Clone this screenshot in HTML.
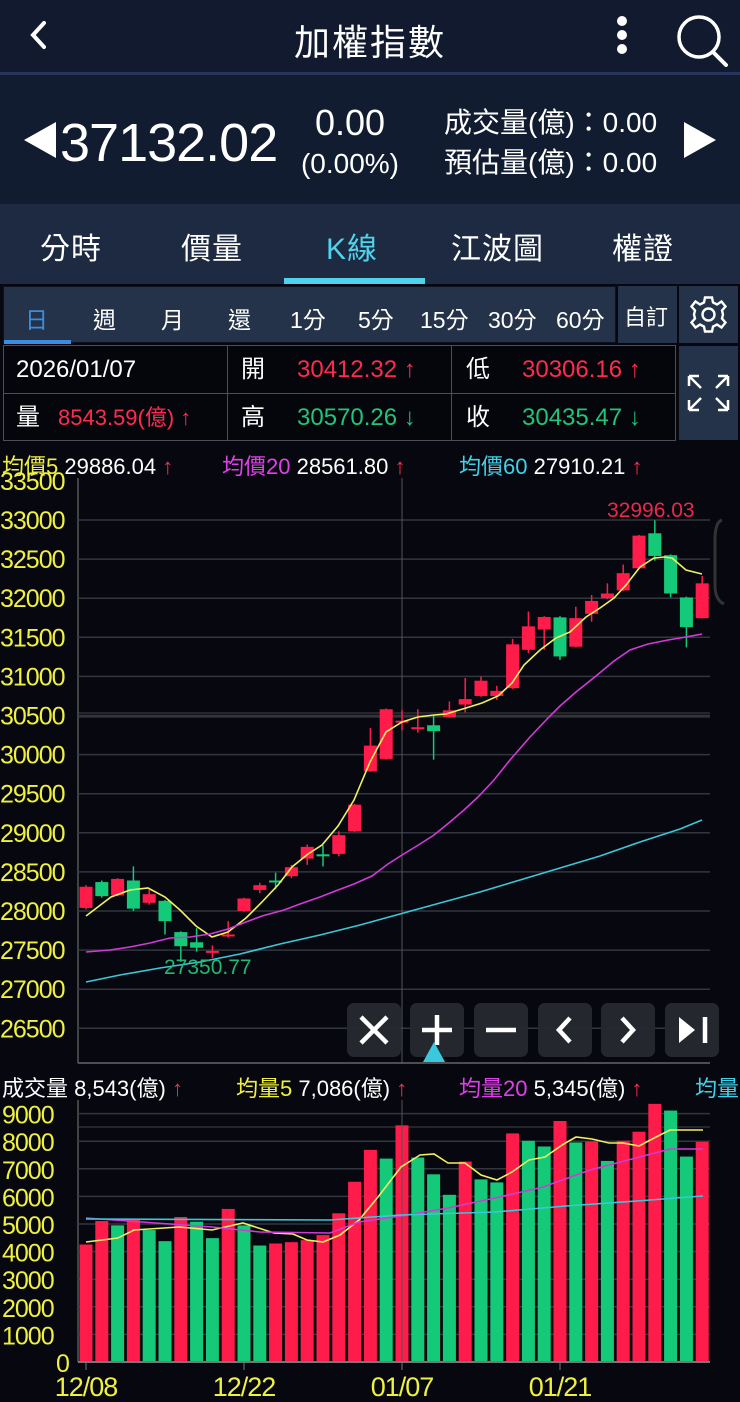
<!DOCTYPE html>
<html><head><meta charset="utf-8">
<style>
*{margin:0;padding:0;box-sizing:border-box}
body{width:740px;height:1402px;background:#07080f;font-family:"Liberation Sans","Noto Sans CJK TC",sans-serif;color:#fff;position:relative;overflow:hidden}
.abs{position:absolute}
.hdr{left:0;top:0;width:740px;height:72px;background:#111a2e}
.sep{left:0;top:72px;width:740px;height:3px;background:#27345e}
.quote{left:0;top:75px;width:740px;height:129px;background:#121c30}
.tabs{left:0;top:204px;width:740px;height:80px;background:#1d2a41}
.tab{position:absolute;top:20px;font-size:30px;color:#fff;letter-spacing:1px}
.sub{left:3px;top:286px;width:613px;height:57px;background:#243349;border:1px solid #0c1220}
.st{position:absolute;top:14px;font-size:23px;color:#fff}
.box{background:#243349}
.tbl{left:3px;top:345px;width:673px;height:96px;background:#05060b;border:1px solid #4a4f5a}
.cell{position:absolute;font-size:24px;line-height:30px}
.red{color:#ff2b4f}.grn{color:#20c47a}
.ma{position:absolute;font-size:22px;white-space:nowrap}
</style></head><body>
<div class="abs hdr"></div>
<div class="abs sep"></div>
<svg class="abs" style="left:26px;top:20px" width="24" height="30" viewBox="0 0 24 30"><path d="M18 3 L7 15 L18 27" stroke="#fff" stroke-width="4" fill="none" stroke-linecap="round"/></svg>
<div class="abs" style="left:0;width:740px;top:14px;text-align:center;font-size:36px;letter-spacing:2px">加權指數</div>
<svg class="abs" style="left:612px;top:14px" width="20" height="42"><circle cx="10" cy="7" r="5" fill="#fff"/><circle cx="10" cy="21" r="5" fill="#fff"/><circle cx="10" cy="35" r="5" fill="#fff"/></svg>
<svg class="abs" style="left:674px;top:12px" width="56" height="56"><circle cx="25" cy="25" r="20" stroke="#fff" stroke-width="3.5" fill="none"/><path d="M39 40 L52 53" stroke="#fff" stroke-width="4" stroke-linecap="round"/></svg>

<div class="abs quote"></div>
<svg class="abs" style="left:22px;top:120px" width="36" height="40"><path d="M34 2 L2 20 L34 38Z" fill="#fff"/></svg>
<div class="abs" style="left:60px;top:112px;font-size:54px;letter-spacing:-1px">37132.02</div>
<div class="abs" style="left:300px;top:102px;width:100px;text-align:center;font-size:36px">0.00</div>
<div class="abs" style="left:296px;top:148px;width:108px;text-align:center;font-size:28px">(0.00%)</div>
<div class="abs" style="left:444px;top:101px;font-size:28px">成交量(億)：0.00</div>
<div class="abs" style="left:444px;top:141px;font-size:28px">預估量(億)：0.00</div>
<svg class="abs" style="left:682px;top:120px" width="36" height="40"><path d="M2 2 L34 20 L2 38Z" fill="#fff"/></svg>

<div class="abs tabs">
<div class="tab" style="left:40px">分時</div>
<div class="tab" style="left:181px">價量</div>
<div class="tab" style="left:326px;color:#4fd3ec">K線</div>
<div class="tab" style="left:451px">江波圖</div>
<div class="tab" style="left:612px">權證</div>
<div class="abs" style="left:284px;top:74px;width:141px;height:6px;background:#4fd3ec"></div>
</div>

<div class="abs sub">
<div class="st" style="left:21px;color:#3a8ee0">日</div>
<div class="st" style="left:89px">週</div>
<div class="st" style="left:157px">月</div>
<div class="st" style="left:224px">還</div>
<div class="st" style="left:286px">1分</div>
<div class="st" style="left:354px">5分</div>
<div class="st" style="left:416px">15分</div>
<div class="st" style="left:484px">30分</div>
<div class="st" style="left:552px">60分</div>
<div class="abs" style="left:0;top:53px;width:67px;height:4px;background:#3a8ee0"></div>
</div>
<div class="abs box" style="left:618px;top:286px;width:59px;height:57px"><div class="st" style="left:6px;font-size:22px">自訂</div></div>
<div class="abs box" style="left:679px;top:286px;width:59px;height:57px">
<svg width="59" height="57" viewBox="0 0 59 57"><g transform="translate(29.5,28.5)" fill="none" stroke="#fff" stroke-width="2.4"><path d="M-3.5,-17 L3.5,-17 L4.5,-12 L8.5,-10 L13,-13 L17,-8 L13.5,-4 L14.5,0 L13.5,4 L17,8 L13,13 L8.5,10 L4.5,12 L3.5,17 L-3.5,17 L-4.5,12 L-8.5,10 L-13,13 L-17,8 L-13.5,4 L-14.5,0 L-13.5,-4 L-17,-8 L-13,-13 L-8.5,-10 L-4.5,-12Z"/><circle r="6"/></g></svg></div>

<div class="abs tbl">
<div class="abs" style="left:223px;top:0;width:1px;height:94px;background:#4a4f5a"></div>
<div class="abs" style="left:447px;top:0;width:1px;height:94px;background:#4a4f5a"></div>
<div class="abs" style="left:0;top:47px;width:671px;height:1px;background:#4a4f5a"></div>
<div class="cell" style="left:12px;top:9px">2026/01/07</div>
<div class="cell" style="left:237px;top:9px">開</div>
<div class="cell red" style="left:293px;top:9px">30412.32 ↑</div>
<div class="cell" style="left:462px;top:9px">低</div>
<div class="cell red" style="left:518px;top:9px">30306.16 ↑</div>
<div class="cell" style="left:12px;top:57px">量</div>
<div class="cell red" style="left:54px;top:57px;font-size:22px">8543.59(億) ↑</div>
<div class="cell" style="left:237px;top:57px">高</div>
<div class="cell grn" style="left:293px;top:57px">30570.26 ↓</div>
<div class="cell" style="left:462px;top:57px">收</div>
<div class="cell grn" style="left:518px;top:57px">30435.47 ↓</div>
</div>
<div class="abs box" style="left:679px;top:346px;width:59px;height:94px">
<svg width="59" height="94"><g stroke="#fff" stroke-width="2.5" fill="none"><path d="M10 30 L10 40 M10 30 L20 30 M10 30 L22 42"/><path d="M49 30 L49 40 M49 30 L39 30 M49 30 L37 42"/><path d="M10 64 L10 54 M10 64 L20 64 M10 64 L22 52"/><path d="M49 64 L49 54 M49 64 L39 64 M49 64 L37 52"/></g></svg></div>

<div class="ma" style="left:2px;top:449px"><span style="color:#f0f040">均價5</span> 29886.04 <span class="red">↑</span></div>
<div class="ma" style="left:222px;top:449px"><span style="color:#e040e8">均價20</span> 28561.80 <span class="red">↑</span></div>
<div class="ma" style="left:459px;top:449px"><span style="color:#40d0e8">均價60</span> 27910.21 <span class="red">↑</span></div>

<svg id="ch" class="abs" style="left:0;top:0" width="740" height="1402"></svg>

<div class="ma" style="left:2px;top:1071px">成交量 8,543(億) <span class="red">↑</span></div>
<div class="ma" style="left:236px;top:1071px"><span style="color:#f0f040">均量5</span> 7,086(億) <span class="red">↑</span></div>
<div class="ma" style="left:459px;top:1071px"><span style="color:#e040e8">均量20</span> 5,345(億) <span class="red">↑</span></div>
<div class="ma" style="left:695px;top:1071px"><span style="color:#40d0e8">均量</span></div>

<script>
var s='';var Y=function(p){return 520+(33000-p)*0.0782};
s+='<line x1="78" y1="478" x2="78" y2="1063" stroke="#555" stroke-width="1.5"/>';
for(var p=33500;p>=26500;p-=500){var y=Y(p);if(p<33500)s+='<line x1="78" y1="'+y+'" x2="710" y2="'+y+'" stroke="#33363e" stroke-width="1.5"/>';s+='<text x="0" y="'+(y+9)+'" fill="#f0f040" font-size="25" letter-spacing="-1">'+p+'</text>';}
s+='<line x1="78" y1="713" x2="710" y2="713" stroke="#444" /><line x1="78" y1="717" x2="710" y2="717" stroke="#444"/>';
s+='<line x1="402" y1="478" x2="402" y2="1063" stroke="#555"/>';
s+='<line x1="78" y1="1063" x2="710" y2="1063" stroke="#666" stroke-width="1.5"/>';
var C=[[28040,28310,28330,28020],[28370,28190,28390,28170],[28200,28410,28420,28190],[28390,28030,28570,28000],[28105,28215,28270,28080],[28130,27870,28140,27700],[27730,27550,27740,27350],[27600,27530,27780,27480],[27470,27490,27560,27400],[27690,27700,27870,27660],[28000,28160,28170,27990],[28270,28330,28360,28230],[28390,28385,28490,28280],[28445,28560,28590,28420],[28670,28820,28850,28590],[28725,28720,28840,28570],[28730,28970,29020,28700],[29020,29360,29370,29010],[29785,30115,30340,29780],[29945,30580,30590,29940],[30430,30434,30570,30310],[30345,30350,30580,30280],[30375,30300,30500,29935],[30480,30566,30680,30470],[30640,30710,30980,30540],[30750,30945,31000,30740],[30750,30815,30880,30700],[30850,31410,31480,30840],[31340,31640,31830,31300],[31600,31760,31770,31340],[31755,31255,31770,31210],[31380,31745,31890,31370],[31800,31965,32040,31700],[32000,32060,32190,31990],[32100,32320,32430,32090],[32383,32800,32810,32380],[32830,32540,32996,32480],[32550,32060,32560,32010],[32010,31630,32020,31370],[31745,32190,32285,31740]];
C.forEach(function(c,i){var x=86+15.8*i;var up=c[1]>=c[0];var col=up?'#ff1c4a':'#14c978';var t=Y(Math.max(c[0],c[1])),b=Y(Math.min(c[0],c[1]));
s+='<line x1="'+x+'" y1="'+Y(c[2])+'" x2="'+x+'" y2="'+Y(c[3])+'" stroke="'+col+'" stroke-width="1.5"/>';
s+='<rect x="'+(x-6.5)+'" y="'+t+'" width="13" height="'+Math.max(b-t,2)+'" fill="'+col+'"/>';});
function pl(pts,col){s+='<polyline points="'+pts+'" fill="none" stroke="'+col+'" stroke-width="1.6"/>';}
pl('86,916 111,897 130,890 148,888 165,897 180,910 196,926 212,937 228,932 246,918 262,902 278,885 292,867 308,854 322,845 338,826 354,800 370,762 386,732 402,722 418,717 434,715 446,714 466,708 482,703 498,696 512,683 524,665 540,650 556,638 570,632 586,617 600,608 614,598 626,585 640,567 654,558 664,557 672,558 686,570 702,574','#f0f060');
pl('86,952 110,950 130,947 150,943 170,938 190,937 210,934 228,929 246,922 262,916 284,910 300,904 320,897 338,890 354,884 372,876 388,864 402,855 420,844 434,835 450,822 464,810 478,797 494,780 510,760 530,737 548,718 560,706 576,692 596,676 614,661 630,650 648,644 668,640 686,637 702,634','#d23ad8');
pl('86,982 120,975 160,968 200,962 240,954 280,944 320,935 360,925 400,914 440,903 480,892 520,880 560,868 600,856 640,842 680,829 702,820','#3ac8d8');
s+='<text x="607" y="517" fill="#e8284c" font-size="21">32996.03</text>';
s+='<text x="164" y="974" fill="#22b874" font-size="21">27350.77</text>';
s+='<path d="M722 520 Q715 522 715 540 L715 585 Q715 600 724 604" stroke="#333" stroke-width="3" fill="none"/>';
var bx=[347,410,474,538,601,665];bx.forEach(function(x){s+='<rect x="'+x+'" y="1003" width="54" height="54" rx="7" fill="#26292f" fill-opacity="0.95"/>';});
var W='stroke="#fff" stroke-width="4.5" fill="none"';
s+='<path d="M361 1017 L387 1043 M387 1017 L361 1043" '+W+'/>';
s+='<path d="M437 1015 L437 1045 M422 1030 L452 1030" '+W+'/>';
s+='<path d="M486 1030 L516 1030" '+W+'/>';
s+='<path d="M570 1018 L559 1030 L570 1042" '+W+'/>';
s+='<path d="M622 1018 L633 1030 L622 1042" '+W+'/>';
s+='<path d="M679 1017 L679 1043 L695 1030Z" fill="#fff"/><path d="M705 1017 L705 1043" '+W+'/>';
s+='<path d="M434 1042 L445 1062 L423 1062Z" fill="#3cc8dc"/>';
var VY=function(v){return 1362-v*0.0276};
s+='<line x1="78" y1="1100" x2="78" y2="1362" stroke="#555" stroke-width="1.5"/>';
for(var v=9000;v>=0;v-=1000){var y=VY(v);if(v>0)s+='<line x1="78" y1="'+y+'" x2="710" y2="'+y+'" stroke="#33363e" stroke-width="1.5"/>';s+='<text x="'+(v>=1000?2:56)+'" y="'+(y+10)+'" fill="#f0f040" font-size="25" letter-spacing="-1">'+v+'</text>';}
s+='<line x1="78" y1="1127" x2="710" y2="1127" stroke="#444"/>';
var V=[[4257,1],[5108,1],[4950,0],[5169,1],[4780,0],[4378,0],[5254,1],[5084,0],[4488,0],[5546,1],[4950,0],[4220,0],[4293,1],[4342,1],[4415,1],[4597,1],[5388,1],[6531,1],[7686,1],[7370,0],[8574,1],[7407,0],[6800,0],[6057,0],[7261,1],[6616,0],[6507,0],[8282,1],[8015,0],[7808,0],[8732,1],[7954,0],[7990,1],[7285,0],[8015,1],[8343,1],[9353,1],[9110,0],[7443,0],[7978,1]];
V.forEach(function(b,i){var x=86+15.8*i;var t=VY(b[0]);s+='<rect x="'+(x-6.5)+'" y="'+t+'" width="13" height="'+(1362-t)+'" fill="'+(b[1]?'#ff1c4a':'#14c978')+'"/>';});
s+='<line x1="402" y1="1100" x2="402" y2="1362" stroke="#555"/>';
pl('86,1242 118,1238 134,1230 179,1227 212,1230 243,1223 274,1233 293,1234 307,1240 323,1242 340,1235 359,1220 378,1197 401,1167 420,1155 434,1154 448,1163 465,1163 481,1175 497,1180 512,1172 529,1160 545,1157 562,1145 576,1137 592,1139 609,1143 623,1143 639,1146 656,1137 670,1130 703,1130','#f0f060');
pl('86,1218 142,1222 212,1227 260,1232 330,1233 359,1222 401,1216 448,1208 495,1198 543,1187 590,1170 628,1160 670,1149 703,1149','#d23ad8');
pl('86,1219 330,1220 401,1215 495,1212 566,1206 637,1201 703,1196','#3ac8d8');
s+='<line x1="78" y1="1362" x2="710" y2="1362" stroke="#777" stroke-width="2"/>';
[[86,'12/08'],[244,'12/22'],[402,'01/07'],[560,'01/21']].forEach(function(d){s+='<line x1="'+d[0]+'" y1="1362" x2="'+d[0]+'" y2="1370" stroke="#777"/><text x="'+d[0]+'" y="1396" text-anchor="middle" fill="#f0f040" font-size="27" letter-spacing="-1">'+d[1]+'</text>';});
document.getElementById('ch').innerHTML=s;
</script>
</body></html>
